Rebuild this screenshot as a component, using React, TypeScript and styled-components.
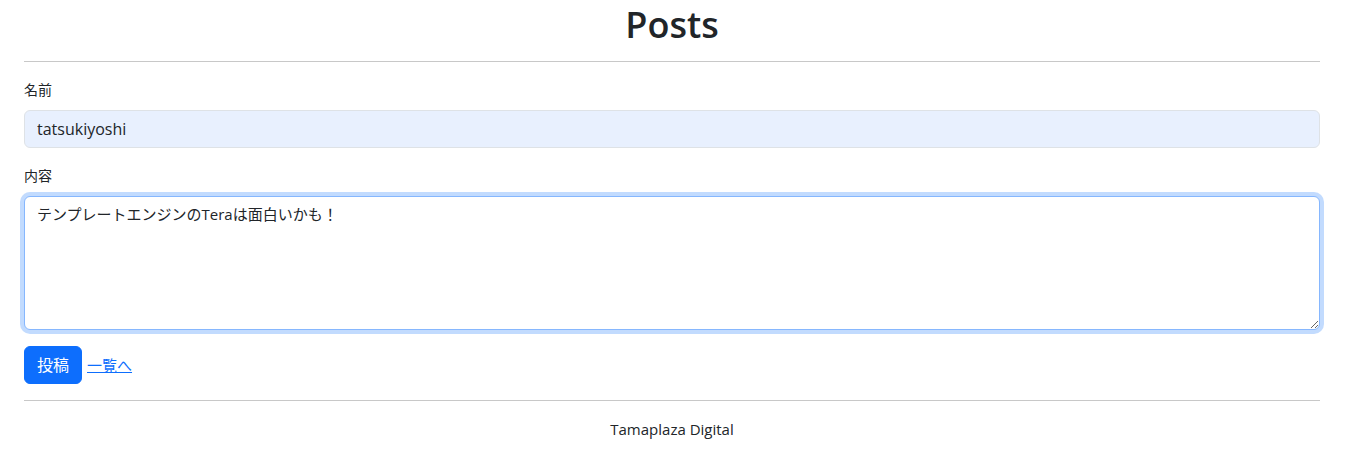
import React from 'react';
import styled, { createGlobalStyle } from 'styled-components';

const GlobalStyle = createGlobalStyle`
  * { box-sizing: border-box; }
  body {
    margin: 0;
    background: #fff;
    color: #212529;
    font-family: "Open Sans", "Noto Sans CJK JP", sans-serif;
    font-size: 16px;
    line-height: 1.5;
  }
`;

const Page = styled.div`
  width: 1296px;
  margin-left: 24px;
`;

const Title = styled.h1`
  margin: 0;
  padding-top: 2px;
  font-size: 36px;
  font-weight: 600;
  line-height: 46px;
  text-align: center;
`;

const Rule = styled.hr<{ $top: number; $bottom: number }>`
  border: 0;
  border-top: 1px solid #c8c8c8;
  margin: ${(p) => p.$top}px 0 ${(p) => p.$bottom}px;
`;

const Field = styled.div`
  margin-bottom: 16px;
`;

const Label = styled.label`
  display: block;
  margin-bottom: 8px;
  font-size: 14px;
  line-height: 24px;
`;

const TextInput = styled.input`
  display: block;
  width: 100%;
  height: 38px;
  padding: 6px 12px;
  font: inherit;
  color: #212529;
  background: #e8f0fe;
  border: 1px solid #dee2e6;
  border-radius: 6px;
  outline: none;
`;

const TextArea = styled.textarea`
  display: block;
  width: 100%;
  height: 134px;
  padding: 6px 12px;
  font: inherit;
  font-size: 15px;
  color: #212529;
  background: #fff;
  border: 1px solid #86b7fe;
  border-radius: 6px;
  box-shadow: 0 0 0 4px rgba(13, 110, 253, 0.25);
  outline: none;
  resize: vertical;
`;

const Actions = styled.div`
  display: flex;
  align-items: center;
  gap: 5px;
`;

const Submit = styled.button`
  height: 38px;
  padding: 6px 12px;
  font: inherit;
  color: #fff;
  background: #0d6efd;
  border: 1px solid #0d6efd;
  border-radius: 6px;
`;

const BackLink = styled.a`
  color: #0d6efd;
  text-decoration: underline;
  font-size: 15px;
`;

const Footer = styled.footer`
  text-align: center;
  font-size: 15px;
  line-height: 24px;
`;

export default function App() {
  return (
    <>
      <GlobalStyle />
      <Page>
        <Title>Posts</Title>
        <Rule $top={13} $bottom={16} />
        <form>
          <Field>
            <Label>名前</Label>
            <TextInput defaultValue="tatsukiyoshi" />
          </Field>
          <Field>
            <Label>内容</Label>
            <TextArea defaultValue="テンプレートエンジンのTeraは面白いかも！" />
          </Field>
          <Actions>
            <Submit type="button">投稿</Submit>
            <BackLink href="#">一覧へ</BackLink>
          </Actions>
        </form>
        <Rule $top={16} $bottom={16} />
        <Footer>Tamaplaza Digital</Footer>
      </Page>
    </>
  );
}
